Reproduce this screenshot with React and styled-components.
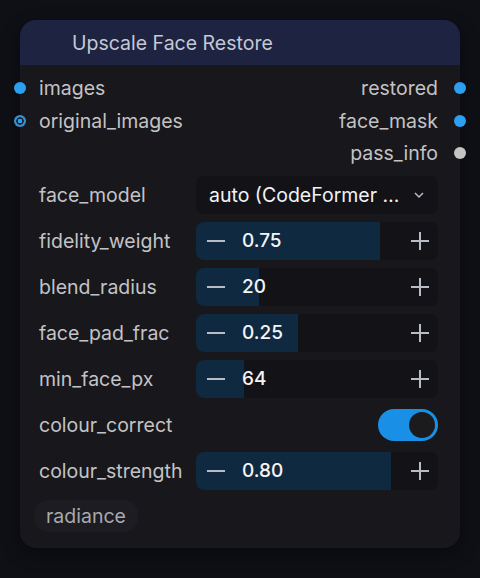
import styled, { createGlobalStyle } from "styled-components"

const Global = createGlobalStyle`
  html, body {
    margin: 0;
    padding: 0;
    background: #0e1016;
    font-family: Inter, "Noto Sans", sans-serif;
  }
`

const Page = styled.div`
  width: 480px;
  height: 578px;
  padding: 20px;
  box-sizing: border-box;
`

const Node = styled.div`
  position: relative;
  width: 440px;
  background: #18171b;
  border-radius: 16px;
  padding-bottom: 16px;
  box-shadow: 0 6px 18px rgba(0, 0, 0, 0.45);
`

const Header = styled.div`
  height: 45px;
  background: #1d2340;
  border-radius: 16px 16px 0 0;
  display: flex;
  align-items: center;
  padding-left: 18px;
  gap: 20px;
  color: #c4c8d6;
  font-size: 19.5px;
`

const Slots = styled.div`
  padding-top: 7px;
  display: flex;
  flex-direction: column;
`

const SlotRow = styled.div`
  position: relative;
  height: 32.5px;
  display: flex;
  align-items: center;
  justify-content: ${(p) => (p.$right ? "flex-end" : "flex-start")};
  padding: 0 22px 0 19px;
  font-size: 19.5px;
  color: #c3c3c6;
`

const Dot = styled.span`
  position: absolute;
  top: 50%;
  ${(p) => (p.$right ? "right: -6px;" : "left: -6px;")}
  width: 12px;
  height: 12px;
  margin-top: -6px;
  border-radius: 50%;
  box-sizing: border-box;
  background: ${(p) => p.$color || "#2d9ff0"};
  ${(p) =>
    p.$hollow &&
    `
    background: radial-gradient(circle, #2d9ff0 0 2px, #1a2a3a 2.5px 3.5px, #3a8fd0 4px);
  `}
`

const Widgets = styled.div`
  padding: 6px 22px 0 19px;
  display: flex;
  flex-direction: column;
  gap: 8px;
`

const WidgetRow = styled.div`
  height: 38px;
  display: flex;
  align-items: center;
  justify-content: space-between;
`

const Label = styled.span`
  font-size: 19.5px;
  color: #c3c3c6;
`

const Combo = styled.div`
  width: 242px;
  height: 38px;
  box-sizing: border-box;
  background: #121217;
  border-radius: 8px;
  display: flex;
  align-items: center;
  justify-content: space-between;
  padding: 0 12px 0 13px;
  color: #f2f2f4;
  font-size: 19.5px;
`

const Number = styled.div`
  position: relative;
  width: 242px;
  height: 38px;
  background: #121217;
  border-radius: 8px;
  overflow: hidden;
  display: flex;
  align-items: center;
  padding: 0 8px 0 10px;
  box-sizing: border-box;
`

const Fill = styled.div`
  position: absolute;
  left: 0;
  top: 0;
  bottom: 0;
  background: #0f2940;
`

const Btn = styled.span`
  position: relative;
  width: 20px;
  height: 20px;
  display: flex;
  align-items: center;
  justify-content: center;
  color: #b8bcc4;
`

const Value = styled.span`
  position: relative;
  flex: 1;
  margin-left: 16px;
  color: #f4f4f6;
  font-size: 19px;
  font-weight: 500;
`

const Toggle = styled.div`
  width: 60px;
  height: 32px;
  border-radius: 16px;
  background: #1a8fe6;
  display: flex;
  align-items: center;
  justify-content: flex-end;
  padding-right: 3px;
  box-sizing: border-box;
`

const Knob = styled.span`
  width: 26px;
  height: 26px;
  border-radius: 50%;
  background: #1b1b1e;
`

const Tag = styled.div`
  margin: 10px 0 0 14px;
  display: inline-flex;
  align-items: center;
  height: 32px;
  padding: 0 12px;
  border-radius: 14px;
  background: #1c1c22;
  color: #a9a9ae;
  font-size: 19.5px;
`

const Minus = () => (
  <svg width="20" height="20" viewBox="0 0 20 20">
    <path d="M1 10h18" stroke="currentColor" strokeWidth="2" />
  </svg>
)

const Plus = () => (
  <svg width="20" height="20" viewBox="0 0 20 20">
    <path d="M1 10h18M10 1v18" stroke="currentColor" strokeWidth="2" />
  </svg>
)

const numbers = [
  { label: "fidelity_weight", value: "0.75", frac: 0.76 },
  { label: "blend_radius", value: "20", frac: 0.26 },
  { label: "face_pad_frac", value: "0.25", frac: 0.42 },
  { label: "min_face_px", value: "64", frac: 0.2 },
]

const NumberWidget = ({ label, value, frac }) => (
  <WidgetRow>
    <Label>{label}</Label>
    <Number>
      <Fill style={{ width: `${frac * 100}%` }} />
      <Btn>
        <Minus />
      </Btn>
      <Value>{value}</Value>
      <Btn>
        <Plus />
      </Btn>
    </Number>
  </WidgetRow>
)

export default function App() {
  return (
    <Page>
      <Global />
      <Node>
        <Header>
          <svg width="14" height="14" viewBox="0 0 14 14">
            <path d="M2 5l5 5 5-5" stroke="#20263f" strokeWidth="2" fill="none" />
          </svg>
          <span>Upscale Face Restore</span>
        </Header>
        <Slots>
          <SlotRow>
            <Dot />
            images
          </SlotRow>
          <SlotRow>
            <Dot $hollow />
            original_images
          </SlotRow>
        </Slots>
        <Slots style={{ marginTop: -72 }}>
          <SlotRow $right>
            restored
            <Dot $right />
          </SlotRow>
          <SlotRow $right>
            face_mask
            <Dot $right />
          </SlotRow>
          <SlotRow $right>
            pass_info
            <Dot $right $color="#c4c4c4" />
          </SlotRow>
        </Slots>
        <Widgets>
          <WidgetRow>
            <Label>face_model</Label>
            <Combo>
              <span>auto (CodeFormer …</span>
              <svg width="14" height="14" viewBox="0 0 14 14">
                <path d="M3 5l4 4 4-4" stroke="#b8bcc4" strokeWidth="1.5" fill="none" />
              </svg>
            </Combo>
          </WidgetRow>
          {numbers.map((n) => (
            <NumberWidget key={n.label} {...n} />
          ))}
          <WidgetRow>
            <Label>colour_correct</Label>
            <Toggle>
              <Knob />
            </Toggle>
          </WidgetRow>
          <NumberWidget label="colour_strength" value="0.80" frac={0.806} />
        </Widgets>
        <Tag>radiance</Tag>
      </Node>
    </Page>
  )
}
